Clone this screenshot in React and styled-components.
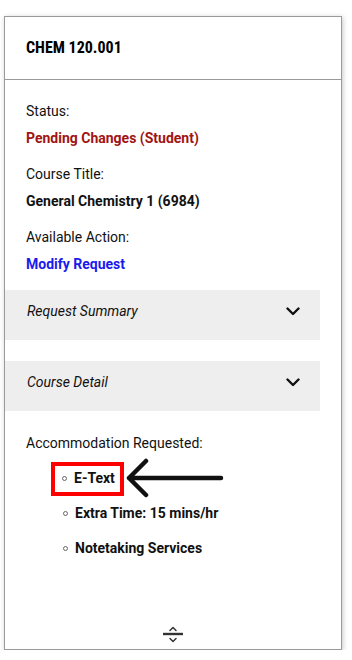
import React from 'react';
import styled, { createGlobalStyle } from 'styled-components';

const GlobalStyle = createGlobalStyle`
  body {
    margin: 0;
    background: #fff;
    font-family: Roboto, "Liberation Sans", sans-serif;
    color: #111;
  }
`;

const Card = styled.div`
  box-sizing: border-box;
  width: 338px;
  height: 634px;
  margin: 16px 0 0 4px;
  border: 1px solid #9a9a9a;
  box-shadow: 1px 1px 5px rgba(0, 0, 0, 0.22);
  display: flex;
  flex-direction: column;
  background: #fff;
`;

const Header = styled.div`
  height: 62px;
  border-bottom: 1px solid #9a9a9a;
  display: flex;
  align-items: center;
  padding: 0 21px;
`;

const Title = styled.h1`
  margin: 0 0 2px;
  font-family: "Roboto Condensed", Roboto, sans-serif;
  font-stretch: 85%;
  font-size: 16px;
  font-weight: 700;
  line-height: 19px;
  color: #000;
`;

const Body = styled.div`
  padding: 21px 21px 0;
  flex: 1;
  display: flex;
  flex-direction: column;
`;

const Label = styled.p`
  margin: 0 0 7px;
  font-size: 14px;
  line-height: 20px;
`;

const Value = styled.p`
  margin: 0 0 16px;
  font-size: 14px;
  line-height: 20px;
  font-weight: 700;
  color: ${(p) => p.$color || '#111'};
`;

const ActionLink = styled.a`
  display: block;
  font-size: 14px;
  line-height: 20px;
  font-weight: 700;
  color: #1a1aee;
  text-decoration: none;
  cursor: pointer;
`;

const Accordion = styled.div`
  margin: ${(p) => p.$top}px 0 0 -21px;
  height: 50px;
  box-sizing: border-box;
  padding: 11px 20px 19px 22px;
  background: #eeeeee;
  display: flex;
  align-items: center;
  justify-content: space-between;
  cursor: pointer;
`;

const AccordionTitle = styled.span`
  font-size: 14px;
  line-height: 20px;
  font-style: italic;
  color: #111;
`;

const Chevron = () => (
  <svg width="14" height="9" viewBox="0 0 14 9" fill="none">
    <path d="M1.5 1.5 L7 7 L12.5 1.5" stroke="#111" strokeWidth="2.4" strokeLinecap="round" strokeLinejoin="round" />
  </svg>
);

const SectionLabel = styled(Label)`
  margin: 22px 0 0;
`;

const List = styled.ul`
  list-style: none;
  margin: 15px 0 0;
  padding: 0 0 0 37px;
`;

const Item = styled.li`
  display: flex;
  align-items: center;
  margin-bottom: 15px;
  font-size: 14px;
  line-height: 20px;
  font-weight: 700;
`;

const Bullet = styled.span`
  box-sizing: border-box;
  width: 5px;
  height: 5px;
  border: 1px solid #666;
  border-radius: 50%;
  margin-right: 7px;
  flex-shrink: 0;
`;

const Highlight = styled.span`
  display: flex;
  align-items: center;
  border: 4px solid #f00;
  padding: 2px 5px 4px 7px;
  margin: -6px 0 -8px -12px;
`;

const Arrow = styled.svg`
  margin: -10px 0 -10px 0;
  flex-shrink: 0;
`;

const Footer = styled.div`
  margin-top: auto;
  display: flex;
  justify-content: center;
  padding-bottom: 5px;
`;

const items = ['Extra Time: 15 mins/hr', 'Notetaking Services'];

export default function App() {
  return (
    <>
      <GlobalStyle />
      <Card>
        <Header>
          <Title>CHEM 120.001</Title>
        </Header>
        <Body>
          <Label>Status:</Label>
          <Value $color="#a01414">Pending Changes (Student)</Value>
          <Label>Course Title:</Label>
          <Value>General Chemistry 1 (6984)</Value>
          <Label>Available Action:</Label>
          <ActionLink>Modify Request</ActionLink>

          <Accordion $top={16}>
            <AccordionTitle>Request Summary</AccordionTitle>
            <Chevron />
          </Accordion>
          <Accordion $top={21}>
            <AccordionTitle>Course Detail</AccordionTitle>
            <Chevron />
          </Accordion>

          <SectionLabel>Accommodation Requested:</SectionLabel>
          <List>
            <Item>
              <Highlight>
                <Bullet />
                E-Text
              </Highlight>
              <Arrow width="100" height="40" viewBox="0 0 100 40" fill="none">
                <path d="M5 20 L97 20 M22 3 L5 20 L22 37" stroke="#111" strokeWidth="4.5" strokeLinecap="round" strokeLinejoin="round" />
              </Arrow>
            </Item>
            {items.map((t) => (
              <Item key={t}>
                <Bullet />
                {t}
              </Item>
            ))}
          </List>
        </Body>
        <Footer>
          <svg width="22" height="18" viewBox="0 0 22 18" fill="none">
            <path d="M8 4.5 L11 1.5 L14 4.5 M8 12.5 L11 15.5 L14 12.5" stroke="#333" strokeWidth="1.5" strokeLinecap="round" strokeLinejoin="round" />
            <path d="M1 8 L21 8" stroke="#333" strokeWidth="2.4" />
          </svg>
        </Footer>
      </Card>
    </>
  );
}
